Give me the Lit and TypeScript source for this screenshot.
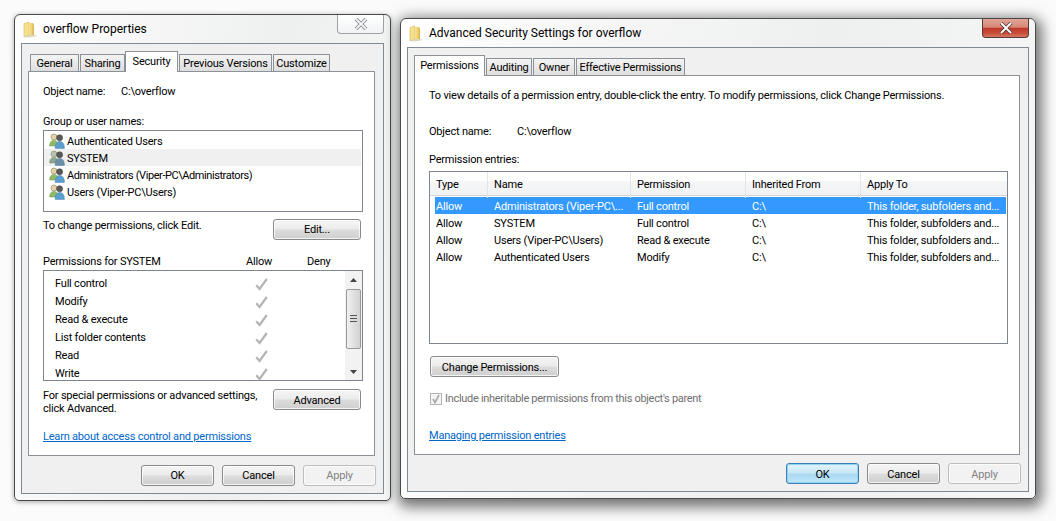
import { LitElement, html, css, svg } from "lit";
import { customElement } from "lit/decorators.js";

const folder = html`<svg class="folder" width="16" height="17" viewBox="0 0 16 17">
  <defs><linearGradient id="fg" x1="0" x2="1" y1="0" y2="0"><stop offset="0" stop-color="#f7e39a"/><stop offset=".55" stop-color="#f0d070"/><stop offset="1" stop-color="#d9b04a"/></linearGradient></defs>
  <path d="M1 2.5 L6 1 V14 L1 16 Z" fill="#f5e08c" stroke="#d8bd66" stroke-width=".6"/>
  <path d="M6 2 H10 L11 4 V14 H6 Z" fill="url(#fg)"/>
  <path d="M1 16 L6 14 H12 L14 15 L6 16.5 Z" fill="#cfc7a6" opacity=".7"/>
</svg>`;

const users = (grey: boolean) => {
  const back = grey ? "#8fa58f" : "#8fbb62";
  const backHead = grey ? "#b9c4b4" : "#e8cfa6";
  const front = grey ? "#6d8fa8" : "#5b9fd0";
  return html`<svg class="uicon" width="16" height="16" viewBox="0 0 16 16">
    ${svg`<circle cx="5" cy="4" r="3" fill="${backHead}" stroke="#8d9a72" stroke-width=".7"/>
    <path d="M.6 13 C.6 8.8 2.6 7.4 5 7.4 C7.4 7.4 9 8.8 9 13 Z" fill="${back}" stroke="#7a9560" stroke-width=".5"/>
    <circle cx="10.6" cy="4.8" r="3" fill="#5c5a58" stroke="#3f3f3f" stroke-width=".6"/>
    <path d="M6.2 15.4 C6.2 10.4 8 8.4 10.8 8.4 C13.4 8.4 15.4 10.4 15.4 15.4 Z" fill="${front}" stroke="#4a7ea6" stroke-width=".5"/>`}
  </svg>`;
};

const check = html`<svg class="chk" width="13" height="13" viewBox="0 0 13 13"><path d="M1.2 7.2 L4.6 11 L11.8 1" fill="none" stroke="#b4b4b4" stroke-width="2.2"/></svg>`;

const arrow = (up: boolean) => html`<div class="sbtn"><svg width="7" height="4" viewBox="0 0 7 4"><path d="${up ? "M0 4 L3.5 0 L7 4 Z" : "M0 0 L7 0 L3.5 4 Z"}" fill="#444"/></svg></div>`;

const closeBtn = (active: boolean) => html`<div class="close ${active ? "close-on" : ""}">
  <svg width="14" height="12" viewBox="0 0 14 12"><path d="M2 1 L12 11 M12 1 L2 11" stroke="${active ? "#5a3a34" : "#7f8791"}" stroke-width="3.6" fill="none"/><path d="M2 1 L12 11 M12 1 L2 11" stroke="${active ? "#fff" : "#f4f5f6"}" stroke-width="1.8" fill="none"/></svg>
</div>`;

const tabs = (items: [string, number, boolean][]) => html`<div class="tabs">
  ${items.map(([t, w, on]) => html`<div class="tab ${on ? "on" : ""}" style="width:${w}px">${t}</div>`)}
</div>`;

const footer = (focus: boolean) => html`<div class="footer">
  <div class="btn foot ${focus ? "focus" : ""}">OK</div>
  <div class="btn foot">Cancel</div>
  <div class="btn foot off">Apply</div>
</div>`;

const names: [string, boolean, boolean][] = [
  ["Authenticated Users", false, false],
  ["SYSTEM", true, false],
  ["Administrators (Viper-PC\\Administrators)", false, true],
  ["Users (Viper-PC\\Users)", false, false],
];
const perms = ["Full control", "Modify", "Read & execute", "List folder contents", "Read", "Write"];
const rows = [
  ["Allow", "Administrators (Viper-PC\\...", "Full control", "C:\\", "This folder, subfolders and..."],
  ["Allow", "SYSTEM", "Full control", "C:\\", "This folder, subfolders and..."],
  ["Allow", "Users (Viper-PC\\Users)", "Read & execute", "C:\\", "This folder, subfolders and..."],
  ["Allow", "Authenticated Users", "Modify", "C:\\", "This folder, subfolders and..."],
];

@customElement("app-root")
export class AppRoot extends LitElement {
  static styles = css`
    :host { display: block; }
    .desk { position: relative; width: 1056px; height: 521px; overflow: hidden; background: #fbfbfb;
      font: 11px/16px Roboto, "Liberation Sans", sans-serif; letter-spacing: -0.2px; color: #000; }
    .win { position: absolute; box-sizing: border-box; display: flex; flex-direction: column;
      border: 1px solid #4a4a4a; border-radius: 6px 6px 5px 5px; padding: 0 6px 6px;
      background: linear-gradient(100deg, #fff 0%, #f6f6f6 30%, #eef0f0 60%, #f6f7f7 100%); }
    .w1 { left: 14px; top: 14px; width: 377px; height: 487px; box-shadow: 0 1px 5px rgba(0,0,0,.35); }
    .w2 { left: 400px; top: 18px; width: 636px; height: 481px; box-shadow: 2px 4px 14px 4px rgba(0,0,0,.55); }
    .title { height: 28px; flex: none; display: flex; align-items: center; position: relative; font-size: 12px; letter-spacing: 0; }
    .folder { margin: 0 4px 0 2px; flex: none; }
    .close { position: absolute; right: 0; top: 0; width: 47px; height: 19px; box-sizing: border-box; display: flex;
      align-items: center; justify-content: center; border: 1px solid #9ea3a8; border-top: none; border-radius: 0 0 4px 4px;
      background: linear-gradient(#fff, #f2f3f4); }
    .close-on { border-color: #5a3a34; background: linear-gradient(#e2a397 0%, #d78a78 45%, #c0392b 52%, #c9503a 80%, #d47a62 100%); }
    .frame { flex: 1; min-height: 0; box-sizing: border-box; border: 1px solid #7f8a94; background: #f0f0f0; padding: 7px 7px 0 6px; }
    .tabs { display: flex; height: 20px; align-items: flex-end; padding-left: 2px; position: relative; z-index: 1; }
    .w2 .tabs { padding-left: 0; }
    .tab { box-sizing: border-box; height: 17px; border: 1px solid #8c9198; border-bottom: none; margin-right: 1px; text-align: center;
      line-height: 17px; white-space: nowrap; background: linear-gradient(#f4f4f4, #dedede); flex: none; }
    .tab.on { height: 21px; margin-bottom: -1px; background: #fff; line-height: 20px; }
    .w1 .tab.on { margin-left: -1px; }
    .panel { box-sizing: border-box; border: 1px solid #8c9198; background: #fff; margin-right: 1px; height: 385px; padding: 11px 13px 0 14px; }
    .w2 .panel { height: 380px; }
    .line { display: flex; height: 16px; line-height: 18px; white-space: nowrap; }
    .lbl1 { width: 78px; }
    .lbl2 { width: 88px; }
    .mt14 { margin-top: 14px; }
    .box { box-sizing: border-box; border: 1px solid #7f858c; margin-top: 1px; }
    .users { height: 82px; width: 320px; padding-top: 1px; }
    .urow { height: 17px; display: flex; align-items: center; padding-left: 5px; margin-right: 1px; white-space: nowrap; }
    .urow span { padding-top: 2px; }
    .urow.hl { background: #f0f0f0; }
    .uicon { margin-right: 2px; flex: none; }
    .tt { letter-spacing: -0.43px; }
    .split { display: flex; justify-content: space-between; width: 318px; margin-top: 7px; }
    .mt8 { margin-top: 8px; }
    .tight { line-height: 13px; white-space: nowrap; }
    .btn { box-sizing: border-box; height: 21px; border: 1px solid #8a8a8a; border-radius: 3px; text-align: center; line-height: 19px;
      background: linear-gradient(#f6f6f6 0%, #ebebeb 48%, #dcdcdc 52%, #cfcfcf 100%); box-shadow: inset 0 0 0 1px rgba(255,255,255,.75); }
    .wide { width: 88px; }
    .adv { line-height: 21px; }
    .w2 .btn { line-height: 21px; }
    .phead { display: grid; grid-template-columns: 203px 61px 1fr; height: 16px; line-height: 17px; margin-top: 13px; }
    .plist { height: 111px; width: 320px; display: flex; overflow: hidden; }
    .pcol { flex: 1; padding-top: 3px; }
    .prow { display: grid; grid-template-columns: 200px 13px; height: 18px; line-height: 20px; align-items: center; padding-left: 11px; }
    .sbar { width: 17px; flex: none; display: flex; flex-direction: column; background: #f2f2f2; }
    .sbtn { height: 17px; display: flex; align-items: center; justify-content: center; flex: none; }
    .thumb { box-sizing: border-box; height: 60px; margin: 1px 1px 0; border: 1px solid #9a9a9a; border-radius: 2px; display: flex; align-items: center; justify-content: center;
      background: linear-gradient(90deg, #f0f0f0, #d2d2d2); }
    .grip { width: 7px; height: 8px; background: repeating-linear-gradient(#555 0 1px, #ddd 1px 3px); }
    .fill { flex: 1; }
    .link { color: #0066cc; text-decoration: underline; }
    .l1 { margin-top: 13px; height: 16px; line-height: 18px; }
    .footer { display: flex; justify-content: flex-end; gap: 8px; margin-top: 9px; }
    .w2 .footer { margin-top: 8px; }
    .foot { width: 73px; }
    .off { color: #838383; border-color: #bdbdbd; background: #f2f2f2; }
    .focus { border-color: #3c7fb1; background: linear-gradient(#e5f4fb 0%, #c8e6f6 48%, #a9d9f2 52%, #c0e6f8 100%); box-shadow: inset 0 0 0 1px #8fd3f5; }

    .mt20 { margin-top: 20px; }
    .mt12 { margin-top: 12px; }
    .tbl { margin-top: 4px; width: 579px; height: 173px; }
    .thead { display: grid; grid-template-columns: 58px 143px 115px 115px 1fr; height: 23px; border-bottom: 1px solid #d5d5d5;
      background: linear-gradient(#fff 0%, #fff 40%, #f5f6f7 41%, #f1f2f4 100%); margin-bottom: 1px; }
    .thead div { padding-left: 6px; line-height: 26px; border-right: 1px solid #e3e5e7; }
    .thead div:last-child { border-right: none; }
    .trow { display: grid; grid-template-columns: 53px 143px 115px 115px 1fr; height: 17px; margin: 0 1px 0 5px; line-height: 19px; }
    .trow div { padding-left: 6px; white-space: nowrap; }
    .trow div:first-child { padding-left: 1px; }
    .trow.sel { background: #3399ff; color: #fff; }
    .change { width: 129px; margin: 12px 0 0 1px; }
    .cbrow { display: flex; align-items: center; height: 16px; margin: 14px 0 0 1px; letter-spacing: -0.3px; color: #6f6f6f; white-space: nowrap; }
    .cb { box-sizing: border-box; width: 12px; height: 12px; border: 1px solid #b4b4b4; background: #f4f4f4; margin-right: 3px; display: flex; align-items: center; justify-content: center; }
    .mt20b { margin-top: 20px; height: 16px; line-height: 17px; }
  `;

  render() {
    return html`<div class="desk">
      <section class="win w1">
        <div class="title">${folder}<span>overflow Properties</span>${closeBtn(false)}</div>
        <div class="frame">
          ${tabs([["General", 49, false], ["Sharing", 45, false], ["Security", 53, true], ["Previous Versions", 93, false], ["Customize", 57, false]])}
          <div class="panel">
            <div class="line"><span class="lbl1">Object name:</span><span>C:\\overflow</span></div>
            <div class="line mt14">Group or user names:</div>
            <div class="box users">
              ${names.map(([n, g, t]) => html`<div class="urow ${g ? "hl" : ""}">${users(g)}<span class="${t ? "tt" : ""}">${n}</span></div>`)}
            </div>
            <div class="split"><span class="tight">To change permissions, click Edit.</span><div class="btn wide">Edit...</div></div>
            <div class="phead"><span>Permissions for SYSTEM</span><span>Allow</span><span>Deny</span></div>
            <div class="box plist">
              <div class="pcol">${perms.map((p) => html`<div class="prow"><span>${p}</span>${check}</div>`)}</div>
              <div class="sbar">${arrow(true)}<div class="thumb"><div class="grip"></div></div><div class="fill"></div>${arrow(false)}</div>
            </div>
            <div class="split mt8"><span class="tight">For special permissions or advanced settings,<br />click Advanced.</span><div class="btn wide adv">Advanced</div></div>
            <div class="l1"><span class="link">Learn about access control and permissions</span></div>
          </div>
          ${footer(false)}
        </div>
      </section>

      <section class="win w2">
        <div class="title">${folder}<span>Advanced Security Settings for overflow</span>${closeBtn(true)}</div>
        <div class="frame">
          ${tabs([["Permissions", 71, true], ["Auditing", 46, false], ["Owner", 42, false], ["Effective Permissions", 109, false]])}
          <div class="panel">
            <div class="line">To view details of a permission entry, double-click the entry. To modify permissions, click Change Permissions.</div>
            <div class="line mt20"><span class="lbl2">Object name:</span><span>C:\\overflow</span></div>
            <div class="line mt12">Permission entries:</div>
            <div class="box tbl">
              <div class="thead"><div>Type</div><div>Name</div><div>Permission</div><div>Inherited From</div><div>Apply To</div></div>
              ${rows.map((r, i) => html`<div class="trow ${i === 0 ? "sel" : ""}">${r.map((c) => html`<div>${c}</div>`)}</div>`)}
            </div>
            <div class="btn change">Change Permissions...</div>
            <div class="cbrow"><div class="cb"><svg width="10" height="10" viewBox="0 0 10 10"><path d="M2 5 L4 8.5 L8 1" fill="none" stroke="#a8a8a8" stroke-width="1.6"/></svg></div><span>Include inheritable permissions from this object's parent</span></div>
            <div class="mt20b"><span class="link">Managing permission entries</span></div>
          </div>
          ${footer(true)}
        </div>
      </section>
    </div>`;
  }
}
